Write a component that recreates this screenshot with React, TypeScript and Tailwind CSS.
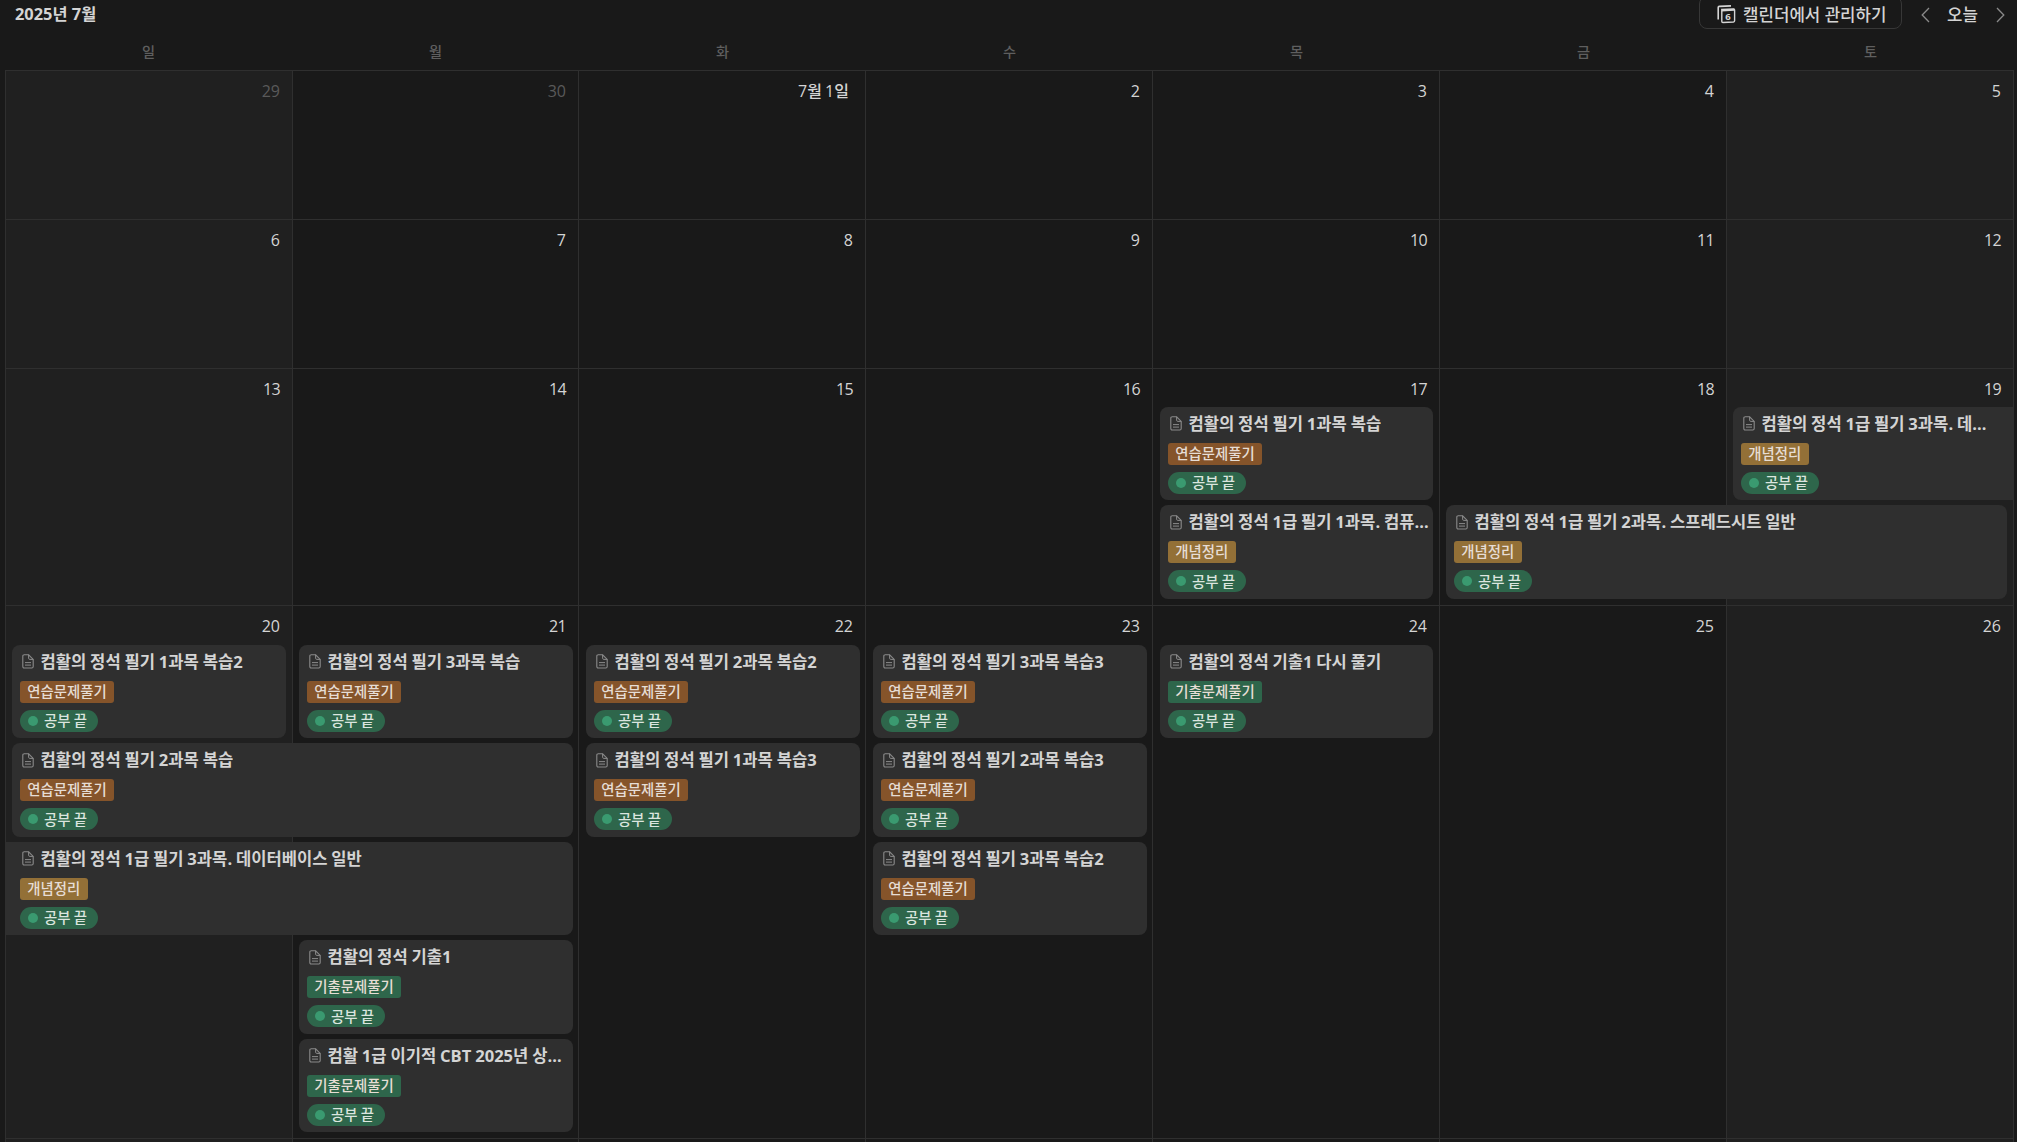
import React from "react";
import clsx from "clsx";

const DAYS = ["일", "월", "화", "수", "목", "금", "토"];

const TAGS = {
    practice: { label: "연습문제풀기", color: "bg-[#85542a]" },
    concept: { label: "개념정리", color: "bg-[#937037]" },
    past: { label: "기출문제풀기", color: "bg-[#2e664b]" },
};

type CalendarEvent = {
    title: string;
    tag: keyof typeof TAGS;
    place: string;
    cutLeft?: boolean;
    cutRight?: boolean;
};

type Week = {
    height: string;
    offset?: string;
    days: string[];
    events: CalendarEvent[];
};

const WEEKS: Week[] = [
    {
        height: "h-[149px]",
        days: ["29", "30", "7월 1일", "2", "3", "4", "5"],
        events: [],
    },
    {
        height: "h-[149px]",
        days: ["6", "7", "8", "9", "10", "11", "12"],
        events: [],
    },
    {
        height: "h-[237px]",
        offset: "pt-[37.9px]",
        days: ["13", "14", "15", "16", "17", "18", "19"],
        events: [
            { title: "컴활의 정석 필기 1과목 복습", tag: "practice", place: "col-start-5 row-start-1" },
            { title: "컴활의 정석 1급 필기 3과목. 데이터베이스 일반", tag: "concept", place: "col-start-7 row-start-1", cutRight: true },
            { title: "컴활의 정석 1급 필기 1과목. 컴퓨터 일반", tag: "concept", place: "col-start-5 row-start-2" },
            { title: "컴활의 정석 1급 필기 2과목. 스프레드시트 일반", tag: "concept", place: "col-start-6 col-span-2 row-start-2" },
        ],
    },
    {
        height: "h-[533px]",
        offset: "pt-[38.6px]",
        days: ["20", "21", "22", "23", "24", "25", "26"],
        events: [
            { title: "컴활의 정석 필기 1과목 복습2", tag: "practice", place: "col-start-1 row-start-1" },
            { title: "컴활의 정석 필기 3과목 복습", tag: "practice", place: "col-start-2 row-start-1" },
            { title: "컴활의 정석 필기 2과목 복습2", tag: "practice", place: "col-start-3 row-start-1" },
            { title: "컴활의 정석 필기 3과목 복습3", tag: "practice", place: "col-start-4 row-start-1" },
            { title: "컴활의 정석 기출1 다시 풀기", tag: "past", place: "col-start-5 row-start-1" },
            { title: "컴활의 정석 필기 2과목 복습", tag: "practice", place: "col-start-1 col-span-2 row-start-2" },
            { title: "컴활의 정석 필기 1과목 복습3", tag: "practice", place: "col-start-3 row-start-2" },
            { title: "컴활의 정석 필기 2과목 복습3", tag: "practice", place: "col-start-4 row-start-2" },
            { title: "컴활의 정석 1급 필기 3과목. 데이터베이스 일반", tag: "concept", place: "col-start-1 col-span-2 row-start-3", cutLeft: true },
            { title: "컴활의 정석 필기 3과목 복습2", tag: "practice", place: "col-start-4 row-start-3" },
            { title: "컴활의 정석 기출1", tag: "past", place: "col-start-2 row-start-4" },
            { title: "컴활 1급 이기적 CBT 2025년 상시 기출문제", tag: "past", place: "col-start-2 row-start-5" },
        ],
    },
    {
        height: "h-[149px]",
        days: ["", "", "", "", "", "", ""],
        events: [],
    },
];

function PageIcon() {
    return (
        <svg width="12" height="15" viewBox="0 0 12 15" fill="none" stroke="#8a8a8a" className="shrink-0">
            <path d="M2 .8h4.6L11.2 5.4V12.6q0 1.4-1.4 1.4H2.2q-1.4 0-1.4-1.4V2.2Q.8.8 2.2.8z" strokeWidth="1.1" />
            <path d="M6.6.8v3.4q0 1.2 1.2 1.2h3.4M3 8.6h6M3 11.1h6" strokeWidth="1" />
        </svg>
    );
}

function ManageIcon() {
    return (
        <svg width="19" height="19" viewBox="0 0 19 19" fill="none" stroke="#d4d4d4" className="shrink-0">
            <path d="M1.2 14.6V2.6Q1.2 1.5 2.3 1.4L14 .9" strokeWidth="1.6" />
            <path d="M4.8 4.5 16.6 4Q17.6 4 17.6 5V15.8Q17.6 16.9 16.5 17L5.9 17.5Q4.8 17.5 4.8 16.4V4.5z" strokeWidth="1.4" />
            <path d="M4.8 5.4 17.4 4.8" strokeWidth="2" />
            <text x="8.2" y="15" fontSize="9.5" fontWeight="700" fill="#d4d4d4" stroke="none">
                6
            </text>
        </svg>
    );
}

function Chevron({ left = false }: { left?: boolean }) {
    return (
        <svg width="9" height="16" viewBox="0 0 9 16" fill="none" stroke="#8a8a8a" strokeWidth="1.3">
            <path d={left ? "M8 1 1.2 8 8 15" : "M1 1 7.8 8 1 15"} />
        </svg>
    );
}

function EventCard({ event }: { event: CalendarEvent }) {
    const tag = TAGS[event.tag];

    return (
        <div
            className={clsx(
                "h-[93.5px] min-w-0 bg-[#2f2f2f] pt-[4px]",
                event.place,
                event.cutLeft ? "rounded-l-none pl-[14px]" : "ml-1.5 rounded-l-lg pl-2",
                event.cutRight ? "mr-px rounded-r-none pr-6" : "mr-[7px] rounded-r-lg pr-1"
            )}
        >
            <div className="flex h-[26px] items-center pl-0.5">
                <PageIcon />
                <div className="ml-[6.5px] truncate text-[16.6px] leading-[26px] font-bold [word-spacing:-0.5px] text-[#d4d4d4]">
                    {event.title}
                </div>
            </div>
            <div className="mt-[6px] flex">
                <span className={clsx("h-[22px] rounded-[3px] px-[7.3px] text-[14.4px] leading-[21px] font-medium text-[#e6ddd5]", tag.color)}>
                    {tag.label}
                </span>
            </div>
            <div className="mt-[7px] flex">
                <span className="flex h-[22px] items-center rounded-full bg-[#2e664b] pr-[11px] pl-2 text-[14.4px] leading-[21px] font-medium [word-spacing:-0.5px] text-[#dbe5df]">
                    <span className="mr-[6px] size-[10px] rounded-full bg-[#3a9a70]" />
                    공부 끝
                </span>
            </div>
        </div>
    );
}

function WeekRow({ week }: { week: Week }) {
    return (
        <div className={clsx("grid shrink-0", week.height)}>
            <div className="col-start-1 row-start-1 grid grid-cols-[287px_286px_repeat(5,287px)]">
                {week.days.map((day, i) => (
                    <div
                        key={i}
                        className={clsx(
                            "border-r border-b border-[#2f2f2f] pt-[8px] text-right text-[16px] leading-6 font-medium",
                            (i === 0 || i === 6) && "bg-[#202020]",
                            day === "29" || day === "30" ? "text-[#5a5a5a]" : "text-[#d4d4d4]",
                            day.length > 2 ? "pr-4 [word-spacing:-1px]" : "pr-3",
                            day.length === 2 && day.includes("1") && "tracking-[-0.6px]"
                        )}
                    >
                        {day}
                    </div>
                ))}
            </div>
            <div className={clsx("col-start-1 row-start-1 grid auto-rows-[98.5px] grid-cols-[repeat(4,287px)_286px_287px_287px]", week.offset)}>
                {week.events.map((event, i) => (
                    <EventCard key={i} event={event} />
                ))}
            </div>
        </div>
    );
}

export default function App() {
    return (
        <div
            lang="ko"
            className="flex h-[1142px] w-[2017px] flex-col overflow-hidden bg-[#191919] font-['Open_Sans','Noto_Sans_CJK_KR',sans-serif]"
        >
            <div className="flex h-[29px] shrink-0 items-start justify-between pr-[12px] pl-[15px]">
                <div className="text-[16.4px] leading-[28px] font-bold text-[#d4d4d4]">2025년 7월</div>
                <div className="flex items-center">
                    <div className="-mt-1 flex h-[33px] w-[203px] items-center rounded-lg border border-[#373737] pt-1 pl-[17px] text-[16.8px] leading-[28px] font-medium text-[#d4d4d4]">
                        <ManageIcon />
                        <span className="ml-[7px] whitespace-nowrap">캘린더에서 관리하기</span>
                    </div>
                    <div className="ml-[19px] flex items-center text-[16.8px] leading-[29px] font-medium text-[#d4d4d4]">
                        <Chevron left />
                        <span className="mr-[18px] ml-[17px]">오늘</span>
                        <Chevron />
                    </div>
                </div>
            </div>
            <div className="mr-[3px] ml-[5px] grid h-[41px] shrink-0 grid-cols-7 text-center text-[14.2px] leading-[45px] font-medium text-[#5f5f5f]">
                {DAYS.map((day) => (
                    <div key={day}>{day}</div>
                ))}
            </div>
            <div className="mr-[3px] ml-[5px] flex flex-col border-t border-l border-[#2f2f2f]">
                {WEEKS.map((week, i) => (
                    <WeekRow key={i} week={week} />
                ))}
            </div>
        </div>
    );
}
